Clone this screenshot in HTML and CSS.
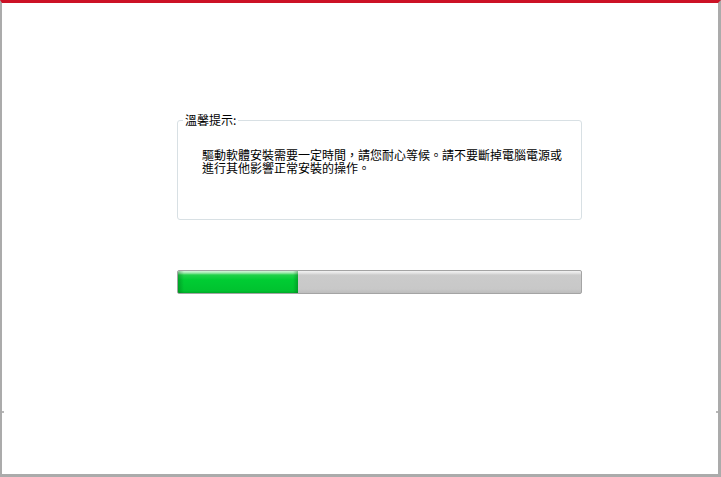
FILE: index.html
```html
<!DOCTYPE html>
<html lang="zh-Hant">
<head>
<meta charset="utf-8">
<title>安裝</title>
<link rel="stylesheet" href="styles.css">
</head>
<body>
<div class="window">
  <div class="content">
    <fieldset class="tips">
      <legend class="tips-title">溫馨提示:</legend>
      <p class="tips-text">驅動軟體安裝需要一定時間，請您耐心等候。請不要斷掉電腦電源或進行其他影響正常安裝的操作。</p>
    </fieldset>
    <div class="progress">
      <div class="progress-fill" style="width: 120px"></div>
    </div>
  </div>
</div>
</body>
</html>
```

FILE: styles.css
```css
html, body {
  margin: 0;
  padding: 0;
  background: #ffffff;
}

.window {
  position: relative;
  box-sizing: border-box;
  width: 721px;
  height: 477px;
  border-top: 3px solid #cc1226;
  border-left: 2px solid #ababab;
  border-right: 3px solid #ababab;
  border-bottom: 3px solid #ababab;
  background: #ffffff;
  font-family: "Noto Sans CJK TC", "Noto Sans CJK SC", sans-serif;
  font-size: 12px;
  color: #000000;
}

.window::before,
.window::after {
  content: "";
  position: absolute;
  top: 408px;
  width: 2px;
  height: 2px;
  background: #b8b8b8;
}

.window::before {
  left: 0;
}

.window::after {
  right: 0;
}

.content {
  display: flex;
  flex-direction: column;
  align-items: flex-start;
  padding: 110px 0 0 175px;
}

.tips {
  box-sizing: border-box;
  width: 405px;
  height: 107px;
  margin: 0;
  padding: 0 0 0 24px;
  min-width: 0;
  border: 1px solid #d8e0e4;
  border-radius: 3px;
}

.tips-title {
  margin-left: -19px;
  padding: 0 2px;
  line-height: 14px;
  font-size: 12px;
}

.tips-text {
  width: 362px;
  margin: 21px 0 0 0;
  line-height: 13px;
  font-size: 12px;
}

.progress {
  box-sizing: border-box;
  width: 405px;
  height: 24px;
  margin-top: 50px;
  border: 1px solid #a4a4a4;
  border-radius: 2px;
  background: linear-gradient(to bottom, #f2f2f2 0, #e4e4e4 2px, #cbcbcb 4px, #c8c8c8 18px, #bdbdbd 22px);
  overflow: hidden;
  display: flex;
}

.progress-fill {
  height: 100%;
  background:
    linear-gradient(to right, rgba(0, 90, 20, 0.35) 0, rgba(0, 90, 20, 0) 6px, rgba(0, 90, 20, 0) calc(100% - 5px), rgba(0, 90, 20, 0.35) 100%),
    linear-gradient(to bottom, #d6f5dc 0, #9be8aa 2px, #22d04a 4px, #00cc33 9px, #00c22f 20px, #00a828 22px);
}
```
